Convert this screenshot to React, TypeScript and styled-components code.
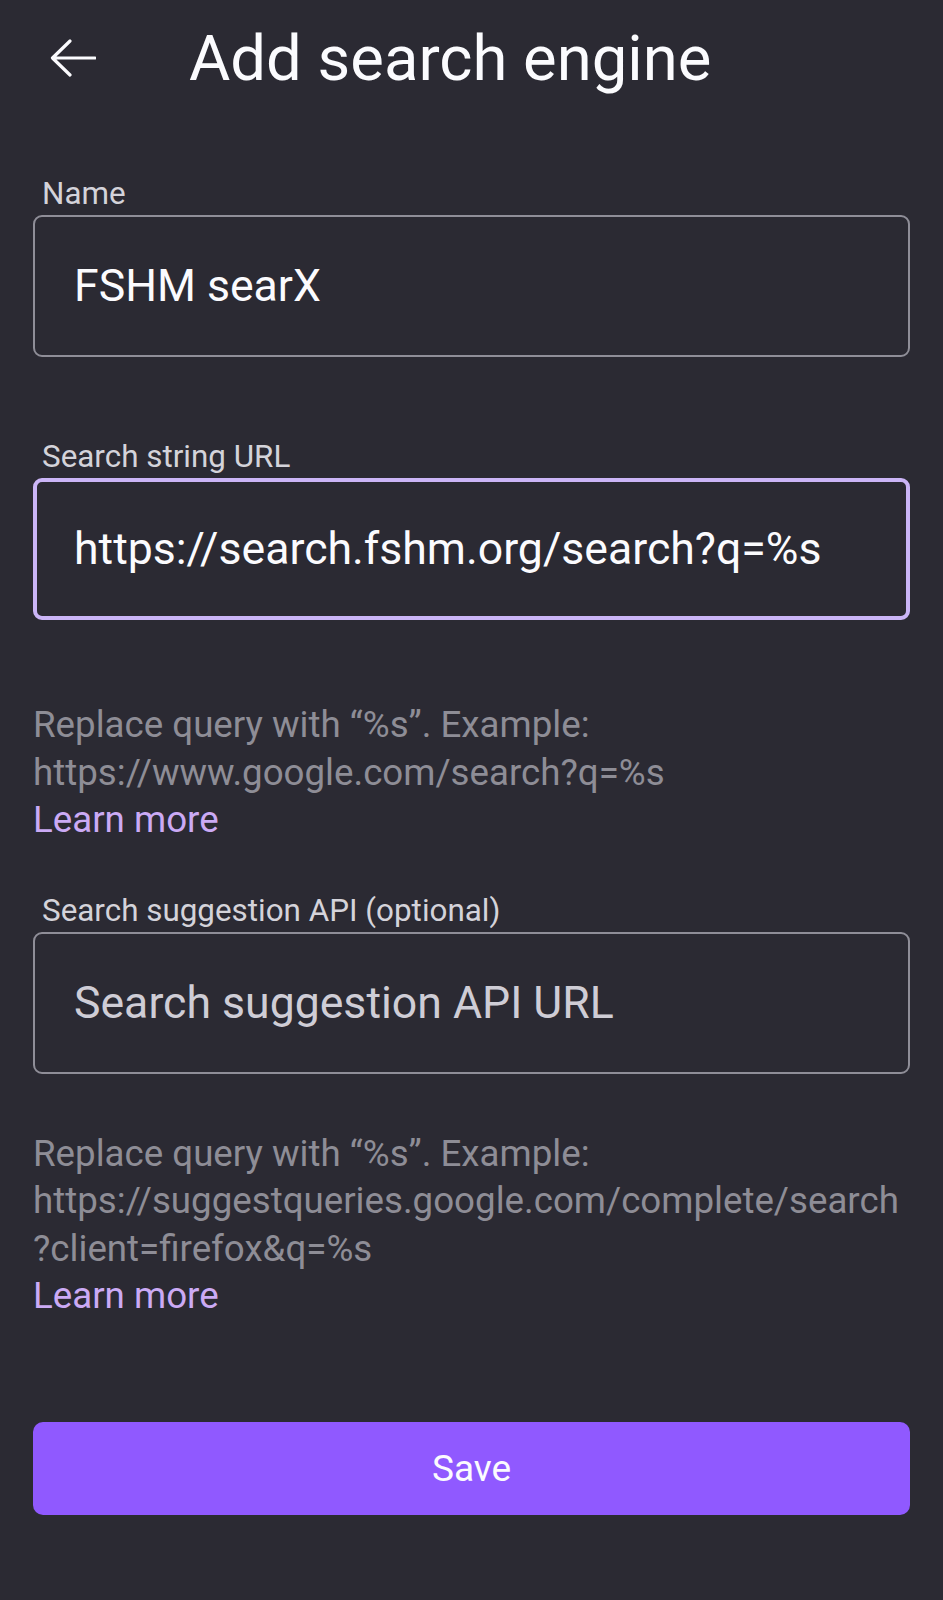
import React from 'react';
import styled, { createGlobalStyle } from 'styled-components';

const GlobalStyle = createGlobalStyle`
  html, body {
    margin: 0;
    padding: 0;
    background: #2b2a33;
  }

  body {
    font-family: Roboto, 'Noto Sans', 'Liberation Sans', sans-serif;
    -webkit-font-smoothing: antialiased;
  }

  * {
    box-sizing: border-box;
  }
`;

const Page = styled.div`
  width: 943px;
  min-height: 1600px;
  background: #2b2a33;
  color: #fbfbfe;
`;

const Header = styled.header`
  height: 116px;
  display: flex;
  align-items: center;
  padding-left: 49px;
  gap: 93px;
`;

const BackButton = styled.button`
  width: 47px;
  height: 40px;
  padding: 0;
  border: 0;
  background: none;
  display: flex;
  align-items: center;
  justify-content: center;
  cursor: pointer;
`;

const Title = styled.h1`
  margin: 0;
  font-size: 63.4px;
  line-height: 118px;
  font-weight: 400;
  color: #fbfbfe;
`;

const Form = styled.form`
  padding: 60px 33px 0;
  display: flex;
  flex-direction: column;
`;

const Field = styled.div<{ $gapAfter: number }>`
  display: flex;
  flex-direction: column;
  margin-bottom: ${(p) => p.$gapAfter}px;
`;

const Label = styled.label`
  font-size: 31.4px;
  line-height: 36px;
  margin: 0 0 3px 9px;
  color: #d4d3da;
`;

const InputBox = styled.div<{ $focused?: boolean }>`
  height: 142px;
  display: flex;
  align-items: center;
  padding-right: 40px;
  padding-left: ${(p) => (p.$focused ? '37px' : '39px')};
  border-radius: 9px;
  border: ${(p) => (p.$focused ? '4px solid #cbb5f7' : '2px solid #8f8e98')};
`;

const Input = styled.input`
  width: 100%;
  border: 0;
  outline: none;
  background: transparent;
  padding: 0;
  font-family: inherit;
  font-size: 44.6px;
  color: #fbfbfe;

  &::placeholder {
    color: #cfcdd6;
    opacity: 1;
  }
`;

const Helper = styled.p<{ $gapAfter: number }>`
  margin: 0 0 ${(p) => p.$gapAfter}px;
  font-size: 36.7px;
  line-height: 47.5px;
  color: #8e8d96;
  white-space: nowrap;
`;

const LearnMore = styled.a`
  color: #cbaaf5;
  text-decoration: none;
`;

const SaveButton = styled.button`
  height: 93px;
  width: 100%;
  border: 0;
  border-radius: 10px;
  background: #9059ff;
  color: #fbfbfe;
  font-family: inherit;
  font-size: 37px;
  cursor: pointer;
`;

const ArrowBack = () => (
  <svg width="47" height="40" viewBox="0 0 47 40" fill="none">
    <path
      d="M46 20H4M21 3L3.5 20L21 37"
      stroke="#fbfbfe"
      strokeWidth="3.2"
      strokeLinecap="round"
      strokeLinejoin="round"
    />
  </svg>
);

export default function App() {
  return (
    <>
      <GlobalStyle />
      <Page>
        <Header>
          <BackButton type="button" aria-label="Back">
            <ArrowBack />
          </BackButton>
          <Title>Add search engine</Title>
        </Header>
        <Form onSubmit={(e) => e.preventDefault()}>
          <Field $gapAfter={82}>
            <Label>Name</Label>
            <InputBox>
              <Input defaultValue="FSHM searX" />
            </InputBox>
          </Field>
          <Field $gapAfter={81}>
            <Label>Search string URL</Label>
            <InputBox $focused>
              <Input defaultValue="https://search.fshm.org/search?q=%s" />
            </InputBox>
          </Field>
          <Helper $gapAfter={49}>
            Replace query with “%s”. Example:
            <br />
            https://www.google.com/search?q=%s
            <br />
            <LearnMore href="#">Learn more</LearnMore>
          </Helper>
          <Field $gapAfter={56}>
            <Label>Search suggestion API (optional)</Label>
            <InputBox>
              <Input placeholder="Search suggestion API URL" />
            </InputBox>
          </Field>
          <Helper $gapAfter={102}>
            Replace query with “%s”. Example:
            <br />
            https://suggestqueries.google.com/complete/search
            <br />
            ?client=firefox&amp;q=%s
            <br />
            <LearnMore href="#">Learn more</LearnMore>
          </Helper>
          <SaveButton type="submit">Save</SaveButton>
        </Form>
      </Page>
    </>
  );
}
